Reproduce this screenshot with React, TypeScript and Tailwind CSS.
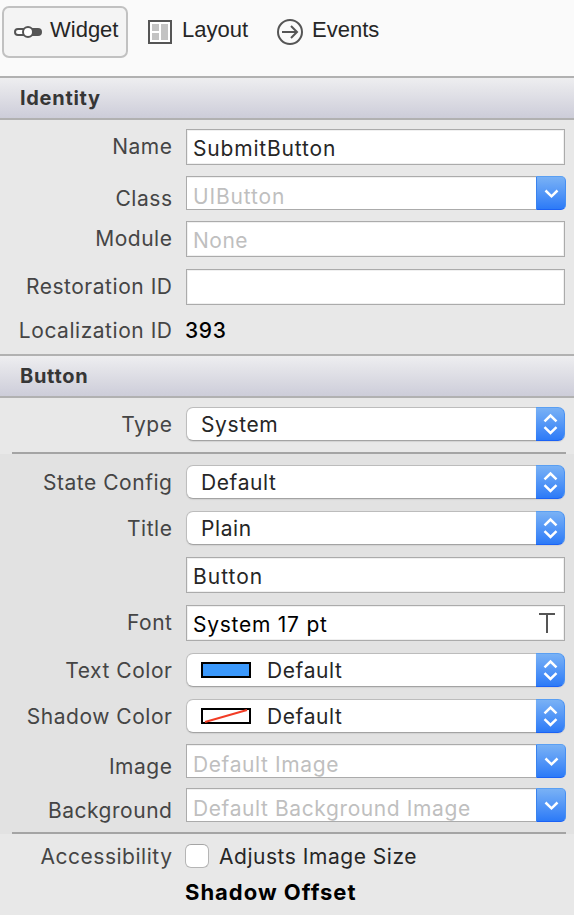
import type { ReactNode } from "react";

function Row({
  label,
  labelClass = "",
  className,
  children,
}: {
  label: string;
  labelClass?: string;
  className: string;
  children: ReactNode;
}) {
  return (
    <div className={`flex items-start gap-[13.5px] ${className}`}>
      <div className={`w-[172.5px] shrink-0 whitespace-nowrap text-right tracking-[0.53px] text-[#454545] ${labelClass}`}>
        {label}
      </div>
      {children}
    </div>
  );
}

function Field({ children }: { children?: ReactNode }) {
  return (
    <div className="flex h-9 w-[379px] items-start justify-between whitespace-nowrap border border-[#ababab] bg-white pl-[6px] pt-[5px] tracking-[0.75px] shadow-[inset_0_0_0_1px_#f0f0f0]">
      {children}
    </div>
  );
}

function Combo({ placeholder, className = "" }: { placeholder: string; className?: string }) {
  return (
    <div className="flex h-[34px] w-[380px]">
      <div className="flex-1 whitespace-nowrap border border-r-0 border-[#ababab] bg-white pl-[6px] pt-[6px] leading-[26px] text-[#bfbfbf] shadow-[inset_0_1px_0_#f0f0f0]">
        <div className={`-mb-2 leading-[28px] ${className}`}>{placeholder}</div>
      </div>
      <div className="w-[30px] rounded-r-[5px] border border-b-[#1b62f5] border-l-[#3a83ee] border-r-[#468ff3] border-t-[#5a9ff2] bg-linear-to-b from-[#79b1f5] to-[#2c7af7]">
        <svg width="28" height="32" viewBox="0 0 28 32" fill="none" stroke="#fff" strokeWidth="2.5">
          <path d="M8.5 13.5l6 5.8 6-5.8" />
        </svg>
      </div>
    </div>
  );
}

function Popup({ children }: { children: ReactNode }) {
  return (
    <div className="flex h-[34px] w-[379px]">
      <div className="flex flex-1 items-start whitespace-nowrap rounded-l-[7px] border border-r-0 border-b-[#a3a3a3] border-l-[#bdbdbd] border-t-[#bcbcbc] bg-white pl-[14px] pt-[3px] tracking-[0.6px] text-[#262626] shadow-[0_1px_1px_#d2d2d2]">
        {children}
      </div>
      <div className="w-[29px] rounded-r-[7px] border border-l-0 border-b-[#1b62f5] border-r-[#468ff3] border-t-[#5a9ff2] bg-linear-to-b from-[#79b1f5] to-[#2c7af7] shadow-[0_1px_1px_#d2d2d2]">
        <svg width="28" height="32" viewBox="0 0 28 32" fill="none" stroke="#fff" strokeWidth="2.5">
          <path d="M8.5 13.3l6-5.8 6 5.8M8.5 19.2l6 5.8 6-5.8" />
        </svg>
      </div>
    </div>
  );
}

function Heading({ children }: { children: string }) {
  return (
    <div className="h-11 border-y-2 border-[#b1b1b1] bg-linear-to-b from-[#eeeef0] to-[#cdcdd9] pl-5 pt-[7px] text-[20px] font-bold leading-[26px] tracking-[0.7px] text-[#363636]">
      {children}
    </div>
  );
}

function Swatch({ empty = false }: { empty?: boolean }) {
  return (
    <svg className="mr-4 mt-[5px] shrink-0" width="50" height="16" viewBox="0 0 50 16">
      <rect x="1" y="1" width="48" height="14" fill={empty ? "#fff" : "#3b99fc"} stroke="#000" strokeWidth="2" />
      {empty && <path d="M4 14L46 2" stroke="#f23c25" strokeWidth="2" />}
    </svg>
  );
}

export default function App() {
  return (
    <div className="h-[915px] w-[574px] overflow-hidden bg-[#e8e8e8] font-['Inter',sans-serif] text-[21px] leading-[28px]">
      <div className="flex h-[76px] items-start bg-[#fafafa] pl-[2px] pt-[6px] font-['Liberation_Sans',sans-serif] text-[22px] leading-[26px] text-[#262626]">
        <div className="flex h-[52px] w-[126px] items-start rounded-[7px] border-2 border-[#c1c1c1] bg-[#f4f4f4] pl-[10px] pt-[9px]">
          <svg className="mr-2 mt-[7px]" width="28" height="16" viewBox="0 0 28 16" fill="none" stroke="#555" strokeWidth="2">
            <rect x="1" y="5" width="20" height="6" rx="3" fill="#fff" />
            <path d="M14 4h10a4 4 0 0 1 0 8H14z" fill="#555" stroke="none" />
            <circle cx="14" cy="8" r="5" fill="#fff" />
          </svg>
          <span>Widget</span>
        </div>
        <div className="ml-5 flex pt-[11px]">
          <svg className="mr-[10px] mt-[3px]" width="24" height="24" viewBox="0 0 24 24">
            <rect x="1" y="1" width="22" height="22" fill="#fff" stroke="#555" strokeWidth="2" />
            <path d="M4 4h7v7H4zM4 13h7v7H4zM13 4h7v16h-7z" fill="#c3c3c3" />
          </svg>
          <span>Layout</span>
        </div>
        <div className="ml-[29px] flex pt-[11px]">
          <svg className="mr-[9px] mt-[2px]" width="26" height="26" viewBox="0 0 26 26" fill="none" stroke="#555" strokeWidth="2">
            <circle cx="13" cy="13" r="12" />
            <path d="M5 13h15M14 7l6 6-6 6" />
          </svg>
          <span>Events</span>
        </div>
      </div>

      <Heading>Identity</Heading>
      <div className="h-[234px] pt-[9px]">
        <Row label="Name" labelClass="pt-[4px]" className="h-9">
          <Field>
            <span className="tracking-[0.82px] text-[#262626]">SubmitButton</span>
          </Field>
        </Row>
        <Row label="Class" labelClass="pt-[9px]" className="mt-[11px] h-[34px]">
          <Combo placeholder="UIButton" className="tracking-[0.85px]" />
        </Row>
        <Row label="Module" labelClass="pt-[4px]" className="mt-[11px] h-9">
          <Field>
            <span className="tracking-[0.5px] text-[#bfbfbf]">None</span>
          </Field>
        </Row>
        <Row label="Restoration ID" labelClass="pt-[4px]" className="mt-3 h-9">
          <Field />
        </Row>
        <Row label="Localization ID" className="mt-3 h-[26px]">
          <div className="-ml-px font-medium tracking-[0.7px] text-black">393</div>
        </Row>
      </div>

      <Heading>Button</Heading>
      <div className="h-[56px] pt-[9px]">
        <Row label="Type" labelClass="pt-[4px]" className="h-[34px]">
          <Popup>System</Popup>
        </Row>
        <div className="ml-3 mt-[11px] h-[2px] w-[554px] bg-[#a4a4a4]" />
      </div>

      <div className="h-[380px] bg-[#e2e2e2] pt-[11px]">
        <Row label="State Config" labelClass="pt-[4px]" className="h-[34px]">
          <Popup>Default</Popup>
        </Row>
        <Row label="Title" labelClass="pt-[4px]" className="mt-3 h-[34px]">
          <Popup>Plain</Popup>
        </Row>
        <Row label="" className="mt-3 h-9">
          <Field>
            <span className="tracking-[1px] text-[#262626]">Button</span>
          </Field>
        </Row>
        <Row label="Font" labelClass="pt-[4px]" className="mt-3 h-9">
          <Field>
            <span className="text-black">System 17 pt</span>
            <svg className="mr-[9px] mt-[2px]" width="16" height="20" viewBox="0 0 16 20" fill="none" stroke="#555" strokeWidth="2">
              <path d="M0 1h16M8 1v19" />
            </svg>
          </Field>
        </Row>
        <Row label="Text Color" labelClass="pt-[4px]" className="mt-3 h-[34px]">
          <Popup>
            <Swatch />
            <span>Default</span>
          </Popup>
        </Row>
        <Row label="Shadow Color" labelClass="pt-[4px]" className="mt-3 h-[34px]">
          <Popup>
            <Swatch empty />
            <span>Default</span>
          </Popup>
        </Row>
        <Row label="Image" labelClass="pt-[9px]" className="mt-[11px] h-[34px]">
          <Combo placeholder="Default Image" className="tracking-[0.6px]" />
        </Row>
        <Row label="Background" labelClass="pt-[9px]" className="mt-[10px] h-[34px]">
          <Combo placeholder="Default Background Image" className="tracking-[0.6px]" />
        </Row>
        <div className="ml-3 mt-[10px] h-[2px] w-[554px] bg-[#a4a4a4]" />
      </div>

      <div className="pt-[9px]">
        <Row label="Accessibility" className="h-[26px]">
          <div className="flex items-start">
            <div className="-ml-px mt-px h-6 w-6 rounded-[6px] border border-[#b5b5b5] border-t-[#a5a5a5] bg-white" />
            <span className="ml-[10px] whitespace-nowrap tracking-[0.53px] text-[#262626]">Adjusts Image Size</span>
          </div>
        </Row>
        <div className="ml-[185px] mt-[9px] whitespace-nowrap text-[22px] font-bold tracking-[1px] text-black">
          Shadow Offset
        </div>
      </div>
    </div>
  );
}
